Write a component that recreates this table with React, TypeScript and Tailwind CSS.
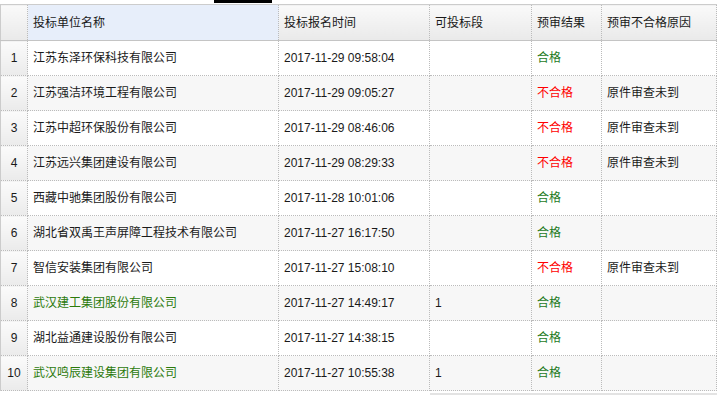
import React from 'react';

type Row = {
  name: string;
  time: string;
  section: string;
  pass: boolean;
  reason: string;
  highlight?: boolean;
};

// 预审结果列表
const ROWS: Row[] = [
  { name: '江苏东泽环保科技有限公司', time: '2017-11-29 09:58:04', section: '', pass: true, reason: '' },
  { name: '江苏强洁环境工程有限公司', time: '2017-11-29 09:05:27', section: '', pass: false, reason: '原件审查未到' },
  { name: '江苏中超环保股份有限公司', time: '2017-11-29 08:46:06', section: '', pass: false, reason: '原件审查未到' },
  { name: '江苏远兴集团建设有限公司', time: '2017-11-29 08:29:33', section: '', pass: false, reason: '原件审查未到' },
  { name: '西藏中驰集团股份有限公司', time: '2017-11-28 10:01:06', section: '', pass: true, reason: '' },
  { name: '湖北省双禹王声屏障工程技术有限公司', time: '2017-11-27 16:17:50', section: '', pass: true, reason: '' },
  { name: '智信安装集团有限公司', time: '2017-11-27 15:08:10', section: '', pass: false, reason: '原件审查未到' },
  { name: '武汉建工集团股份有限公司', time: '2017-11-27 14:49:17', section: '1', pass: true, reason: '', highlight: true },
  { name: '湖北益通建设股份有限公司', time: '2017-11-27 14:38:15', section: '', pass: true, reason: '' },
  { name: '武汉鸣辰建设集团有限公司', time: '2017-11-27 10:55:38', section: '1', pass: true, reason: '', highlight: true },
];

const th = 'h-[36px] px-[5px] text-left font-normal border-x border-dotted border-x-[#bbb] bg-gradient-to-b from-[#fafafa] to-[#e9e9e9]';
const td = 'h-[35px] px-[5px] border border-dotted border-[#bbb] whitespace-nowrap';

export default function App() {
  return (
    <div className="w-[717px] h-[396px] overflow-hidden bg-white text-[12px] text-[#1a1a1a] font-['Liberation_Sans','Noto_Sans_CJK_SC',sans-serif]">
      <div className="ml-[214px] w-[58px] h-[3px] bg-black" />
      <table className="mt-px w-full table-fixed border-collapse border-l border-l-[#ccc]">
        <colgroup>
          <col className="w-[27px]" />
          <col className="w-[251px]" />
          <col className="w-[151px]" />
          <col className="w-[102px]" />
          <col className="w-[70px]" />
          <col />
        </colgroup>
        <thead>
          <tr className="border-t border-t-[#ccc] border-b border-b-[#c4c4c4]">
            <th className={th} />
            <th className="h-[36px] px-[5px] text-left font-normal border-x border-dotted border-x-[#bbb] bg-[#e7eefa]">投标单位名称</th>
            <th className={th}>投标报名时间</th>
            <th className={th}>可投标段</th>
            <th className={th}>预审结果</th>
            <th className={th}>预审不合格原因</th>
          </tr>
        </thead>
        <tbody>
          {ROWS.map((r, i) => (
            <tr key={i} className={i % 2 === 1 ? 'bg-[#f7f7f7]' : 'bg-white'}>
              <td className="h-[35px] text-center border border-dotted border-[#bbb] bg-gradient-to-b from-[#fbfbfb] to-[#ebebeb]">
                {i + 1}
              </td>
              <td className={td + (r.highlight ? ' text-[#2b7a0b]' : '')}>{r.name}</td>
              <td className={td}>{r.time}</td>
              <td className={td}>{r.section}</td>
              <td className={td + (r.pass ? ' text-[#1d7a1d]' : ' text-[#ff0000]')}>{r.pass ? '合格' : '不合格'}</td>
              <td className={td}>{r.reason}</td>
            </tr>
          ))}
        </tbody>
      </table>
      <div className="mt-[2px] ml-[430px] h-[2px] bg-[#e3e3e3]" />
    </div>
  );
}
